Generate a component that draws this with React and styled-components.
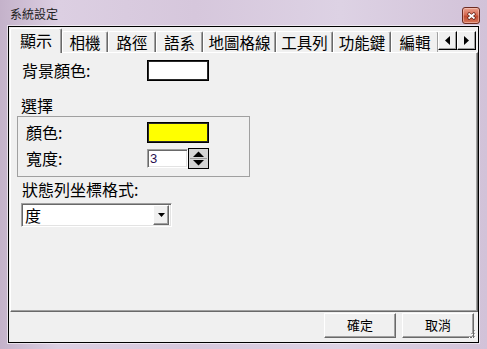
import React from "react";
import styled, { createGlobalStyle } from "styled-components";

const GlobalStyle = createGlobalStyle`
  html, body {
    margin: 0;
    padding: 0;
    overflow: hidden;
    background: #d6c8da;
  }
`;

const Window = styled.div`
  width: 487px;
  height: 349px;
  box-sizing: border-box;
  padding: 0 8px 6px 8px;
  display: flex;
  flex-direction: column;
  background: linear-gradient(
    90deg,
    #c4b2ca 0%,
    #dccfe2 12%,
    #d6c7dc 40%,
    #ddd2e4 70%,
    #d2c2d8 100%
  );
  font-family: "Noto Sans CJK TC", "Noto Sans", sans-serif;
  color: #000;
`;

const TitleBar = styled.div`
  height: 26px;
  flex: none;
  display: flex;
  justify-content: space-between;
  padding-left: 2px;
`;

const Title = styled.span`
  font-size: 12px;
  line-height: 26px;
  color: #222;
  padding-top: 1px;
`;

const CloseButton = styled.div`
  width: 18px;
  height: 17px;
  margin: 7px -1px 0 0;
  box-sizing: border-box;
  border: 1px solid #6e2c22;
  border-radius: 3px;
  background: linear-gradient(180deg, #eaa290 0%, #d66a52 45%, #c04a30 55%, #d8785c 100%);
  box-shadow: inset 0 0 0 1px rgba(255, 220, 210, 0.45);
  display: flex;
  align-items: center;
  justify-content: center;
`;

const Client = styled.div`
  flex: 1;
  position: relative;
  border: 1px solid #000;
  box-shadow: 0 0 0 1px rgba(255, 255, 255, 0.55);
  background: #f0f0f0;
  padding: 1px 0 0 1px;
  display: flex;
  flex-direction: column;
`;

const TabStrip = styled.div`
  height: 24px;
  display: flex;
  align-items: flex-end;
  position: relative;
  z-index: 1;
`;

const TabList = styled.div`
  flex: 1;
  min-width: 0;
  height: 25px;
  margin-bottom: -1px;
  display: flex;
  align-items: flex-end;
  overflow: hidden;
`;

const Tab = styled.div`
  flex: none;
  width: ${(p) => p.$w}px;
  height: ${(p) => (p.$active ? 25 : 21)}px;
  margin-bottom: ${(p) => (p.$active ? 0 : 1)}px;
  box-sizing: border-box;
  background: #f0f0f0;
  border-top: 1px solid #fff;
  border-left: 1px solid #fff;
  border-right: 1px solid #696969;
  box-shadow: inset -1px 0 0 #a0a0a0;
  border-radius: 2px 2px 0 0;
  font-size: ${(p) => (p.$active ? 16 : 15.5)}px;
  line-height: ${(p) => (p.$active ? 22 : 20)}px;
  text-align: center;
  white-space: nowrap;
`;

const ScrollButtons = styled.div`
  flex: none;
  display: flex;
  margin: 0 2px 2px 0;
`;

const ScrollButton = styled.div`
  width: 19px;
  height: 19px;
  box-sizing: border-box;
  background: #f0f0f0;
  border-top: 1px solid #fff;
  border-left: 1px solid #fff;
  border-right: 1px solid #000;
  border-bottom: 1px solid #000;
  box-shadow: inset -1px -1px 0 #a0a0a0;
  display: flex;
  align-items: center;
  justify-content: center;
`;

const Panel = styled.div`
  height: 260px;
  box-sizing: border-box;
  border-top: 1px solid #fff;
  border-left: 1px solid #fff;
  border-right: 1px solid #696969;
  border-bottom: 1px solid #696969;
  box-shadow: inset -1px -1px 0 #a0a0a0;
  padding-top: 7px;
  display: flex;
  flex-direction: column;
  align-items: flex-start;
`;

const Row = styled.div`
  display: flex;
  align-items: center;
  height: 21px;
  margin-left: ${(p) => p.$indent || 0}px;
`;

const Label = styled.span`
  width: ${(p) => p.$w}px;
  font-size: 16px;
  line-height: 21px;
  white-space: nowrap;
`;

const Swatch = styled.div`
  width: 62px;
  height: 21px;
  box-sizing: border-box;
  border: 1px solid #000;
  box-shadow: inset 0 0 0 1px #2a2a2a;
  background: ${(p) => p.$color};
`;

const GroupTitle = styled.div`
  margin: 14px 0 0 10px;
  font-size: 16px;
  line-height: 20px;
`;

const GroupBox = styled.div`
  margin: 1px 0 0 6px;
  width: 233px;
  height: 61px;
  box-sizing: border-box;
  border: 1px solid #a0a0a0;
  padding: 5px 0 0 8px;
  display: flex;
  flex-direction: column;
  gap: 5px;
`;

const Sunken = styled.div`
  box-sizing: border-box;
  background: #fff;
  border: 1px solid;
  border-color: #a0a0a0 #fff #fff #a0a0a0;
  box-shadow: inset 1px 1px 0 #696969, inset -1px -1px 0 #e3e3e3;
`;

const SpinInput = styled(Sunken)`
  width: 41px;
  height: 19px;
  padding-left: 2px;
  font-family: "Liberation Sans", Arial, sans-serif;
  font-size: 13px;
  line-height: 17px;
  color: #2a1050;
`;

const SpinButton = styled.div`
  width: 21px;
  height: 21px;
  box-sizing: border-box;
  border: 1px solid #000;
  background: #d4d4d4;
  display: flex;
`;

const FieldLabel = styled.div`
  margin: 2px 0 0 11px;
  font-size: 16px;
  line-height: 20px;
`;

const Select = styled(Sunken)`
  margin: 4px 0 0 10px;
  width: 151px;
  height: 24px;
  display: flex;
  align-items: center;
  justify-content: space-between;
  padding: 2px;
`;

const SelectText = styled.span`
  font-size: 16px;
  line-height: 20px;
  padding-left: 1px;
`;

const DropButton = styled.div`
  width: 16px;
  height: 20px;
  box-sizing: border-box;
  background: #f0f0f0;
  border-top: 1px solid #fff;
  border-left: 1px solid #fff;
  border-right: 1px solid #696969;
  border-bottom: 1px solid #696969;
  box-shadow: inset -1px -1px 0 #a0a0a0;
  display: flex;
  align-items: center;
  justify-content: center;
`;

const ButtonRow = styled.div`
  display: flex;
  justify-content: flex-end;
  gap: 6px;
  margin-top: 1px;
  padding-right: 4px;
`;

const DialogButton = styled.div`
  width: 72px;
  height: 25px;
  box-sizing: border-box;
  background: #f0f0f0;
  border-top: 1px solid #fff;
  border-left: 1px solid #fff;
  border-right: 1px solid #696969;
  border-bottom: 1px solid #696969;
  box-shadow: inset -1px -1px 0 #a0a0a0;
  font-size: 13px;
  line-height: 22px;
  text-align: center;
`;

const Grip = styled.svg`
  position: absolute;
  right: 1px;
  bottom: 1px;
`;

const tabs = [
  { name: "顯示", w: 52 },
  { name: "相機", w: 46 },
  { name: "路徑", w: 48 },
  { name: "語系", w: 47 },
  { name: "地圖格線", w: 73 },
  { name: "工具列", w: 57 },
  { name: "功能鍵", w: 58 },
  { name: "編輯", w: 48 },
];

const App = () => (
  <>
    <GlobalStyle />
    <Window>
      <TitleBar>
        <Title>系統設定</Title>
        <CloseButton>
          <svg width="9" height="8" viewBox="0 0 9 8">
            <path d="M1 1 L8 7 M8 1 L1 7" stroke="#5a1a10" strokeWidth="3" />
            <path d="M1.5 1.5 L7.5 6.5 M7.5 1.5 L1.5 6.5" stroke="#fff" strokeWidth="1.8" />
          </svg>
        </CloseButton>
      </TitleBar>
      <Client>
        <TabStrip>
          <TabList>
            {tabs.map((t, i) => (
              <Tab key={t.name} $w={t.w} $active={i === 0}>
                {t.name}
              </Tab>
            ))}
          </TabList>
          <ScrollButtons>
            <ScrollButton>
              <svg width="5" height="9" viewBox="0 0 5 9">
                <polygon points="5,0 5,9 0,4.5" fill="#000" />
              </svg>
            </ScrollButton>
            <ScrollButton>
              <svg width="5" height="9" viewBox="0 0 5 9">
                <polygon points="0,0 0,9 5,4.5" fill="#000" />
              </svg>
            </ScrollButton>
          </ScrollButtons>
        </TabStrip>
        <Panel>
          <Row $indent={11}>
            <Label $w={125}>背景顏色:</Label>
            <Swatch $color="#ffffff" />
          </Row>
          <GroupTitle>選擇</GroupTitle>
          <GroupBox>
            <Row>
              <Label $w={121}>顏色:</Label>
              <Swatch $color="#ffff00" />
            </Row>
            <Row>
              <Label $w={121}>寬度:</Label>
              <SpinInput>3</SpinInput>
              <SpinButton>
                <svg width="19" height="19" viewBox="0 0 19 19">
                  <polygon points="4,8 9.5,2.5 15,8" fill="#000" />
                  <line x1="1" y1="9.5" x2="18" y2="9.5" stroke="#9a9a9a" strokeWidth="1" />
                  <polygon points="4,11 15,11 9.5,16.5" fill="#000" />
                </svg>
              </SpinButton>
            </Row>
          </GroupBox>
          <FieldLabel>狀態列坐標格式:</FieldLabel>
          <Select>
            <SelectText>度</SelectText>
            <DropButton>
              <svg width="7" height="4" viewBox="0 0 7 4">
                <polygon points="0,0 7,0 3.5,4" fill="#000" />
              </svg>
            </DropButton>
          </Select>
        </Panel>
        <ButtonRow>
          <DialogButton>確定</DialogButton>
          <DialogButton>取消</DialogButton>
        </ButtonRow>
        <Grip width="12" height="12" viewBox="0 0 12 12">
          {[
            [10, 2], [10, 5], [7, 5], [10, 8], [7, 8], [4, 8],
          ].map(([x, y]) => (
            <g key={`${x}-${y}`}>
              <rect x={x} y={y} width="1" height="1" fill="#fff" />
              <rect x={x - 1} y={y - 1} width="1" height="1" fill="#a0a0a0" />
            </g>
          ))}
        </Grip>
      </Client>
    </Window>
  </>
);

export default App;
